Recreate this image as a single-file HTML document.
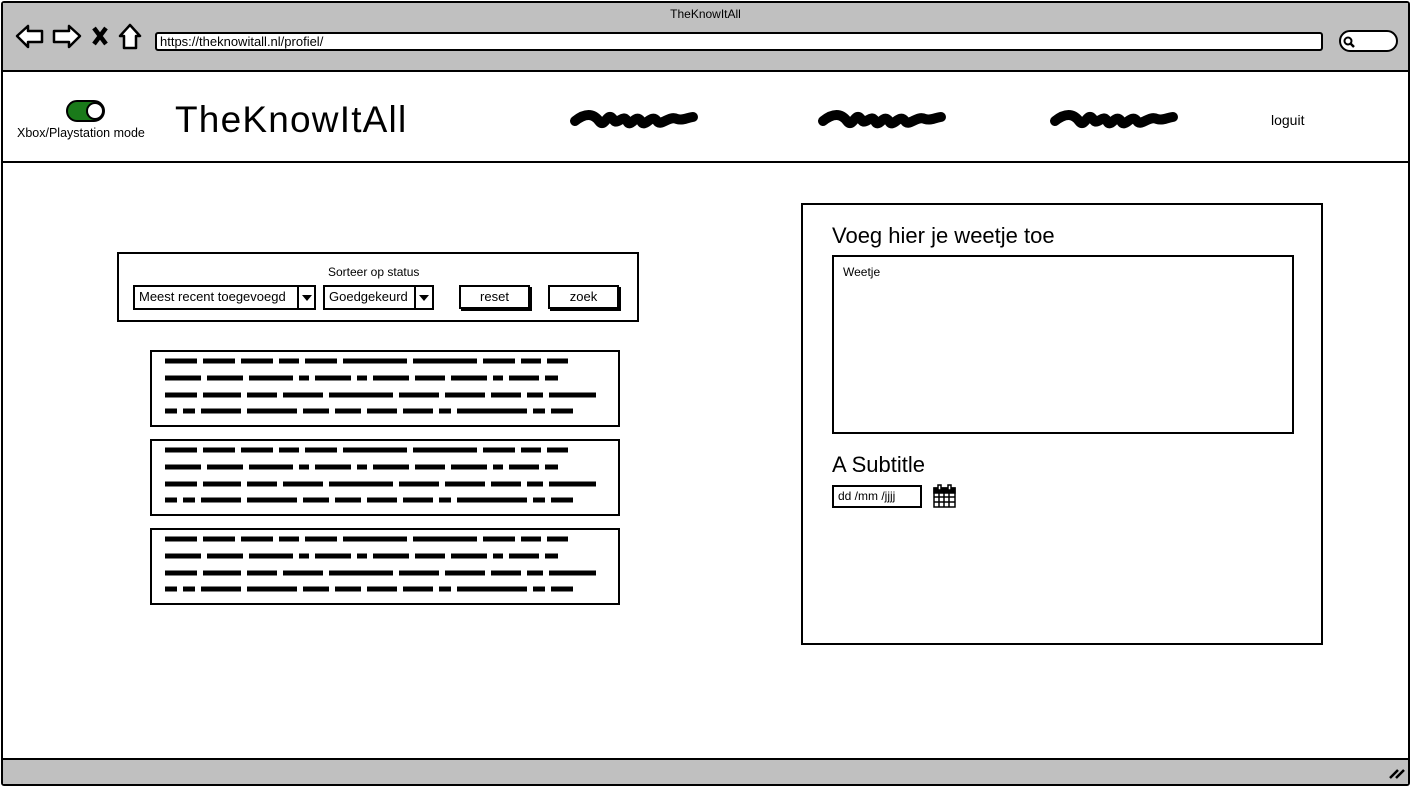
<!DOCTYPE html>
<html><head><meta charset="utf-8"><style>
*{margin:0;padding:0;box-sizing:border-box}
body{width:1411px;height:787px;position:relative;background:#fff;font-family:"Liberation Sans",sans-serif;color:#000;overflow:hidden}
.a{position:absolute}
.bx{position:absolute;border:2px solid #000;background:#fff}
.t{position:absolute;white-space:nowrap}
</style></head><body>
<div class="a" style="left:1px;top:1px;width:1409px;height:785px;border:2px solid #000;border-radius:3px"></div>
<div class="a" style="left:3px;top:3px;width:1405px;height:69px;background:#c0c0c0;border-bottom:2px solid #000"></div>
<div class="t" style="left:0;width:1411px;text-align:center;top:7px;font-size:12px">TheKnowItAll</div>
<svg class="a" style="left:14px;top:22px" width="130" height="30" viewBox="0 0 130 30" fill="#fff" stroke="#000" stroke-width="2.5" stroke-linejoin="round">
<path d="M3 14 L14 4 L14 9 L28 9 L28 20 L14 20 L14 25 Z"/>
<path d="M66 14 L55 4 L55 9 L40 9 L40 20 L55 20 L55 25 Z"/>
<path d="M80 6 L92 22 M92 6 L80 22" stroke-width="4.5"/>
<path d="M106 14 L116 3 L126 14 L122 14 L122 26 L110 26 L110 14 Z"/>
</svg>
<div class="bx" style="left:155px;top:32px;width:1168px;height:19px;border-radius:3px"></div>
<div class="t" style="left:160px;top:34px;font-size:13px">https://theknowitall.nl/profiel/</div>
<div class="bx" style="left:1339px;top:30px;width:59px;height:22px;border-radius:11px"></div>
<svg class="a" style="left:1342px;top:35px" width="14" height="14"><circle cx="6" cy="6" r="3.5" fill="none" stroke="#000" stroke-width="2"/><path d="M8.5 8.5 L12 12" stroke="#000" stroke-width="2.5"/></svg>
<div class="a" style="left:3px;top:161px;width:1405px;height:2px;background:#000"></div>
<div class="a" style="left:66px;top:100px;width:39px;height:22px;border:2px solid #000;border-radius:11px;background:#1a7a1a"></div>
<div class="a" style="left:86px;top:102px;width:18px;height:18px;border-radius:50%;background:#fff;border:2px solid #000"></div>
<div class="t" style="left:17px;top:126px;font-size:12.5px">Xbox/Playstation mode</div>
<div class="t" style="left:175px;top:99px;font-size:37px;letter-spacing:1.2px">TheKnowItAll</div>
<svg class="a" style="left:565px;top:105px" width="620" height="30" fill="none" stroke="#000" stroke-width="10" stroke-linecap="round" stroke-linejoin="round">
<path d="M10 16 C20 8 28 8 34 16 C40 24 42 6 48 14 C52 22 58 8 62 16 C66 24 70 8 76 16 C80 24 86 8 92 16 C96 22 104 10 112 14 C118 16 124 12 128 12"/>
<path d="M258 16 C268 8 276 8 282 16 C288 24 290 6 296 14 C300 22 306 8 310 16 C314 24 318 8 324 16 C328 24 334 8 340 16 C344 22 352 10 360 14 C366 16 372 12 376 12"/>
<path d="M490 16 C500 8 508 8 514 16 C520 24 522 6 528 14 C532 22 538 8 542 16 C546 24 550 8 556 16 C560 24 566 8 572 16 C576 22 584 10 592 14 C598 16 604 12 608 12"/>
</svg>
<div class="t" style="left:1271px;top:112px;font-size:14px">loguit</div>
<div class="bx" style="left:117px;top:252px;width:522px;height:70px"></div>
<div class="t" style="left:328px;top:265px;font-size:12px">Sorteer op status</div>
<div class="bx" style="left:133px;top:285px;width:183px;height:25px"></div>
<div class="a" style="left:297px;top:285px;width:2px;height:25px;background:#000"></div>
<div class="t" style="left:139px;top:289px;font-size:13px">Meest recent toegevoegd</div>
<svg class="a" style="left:301px;top:294px" width="12" height="8"><path d="M1 1 L11 1 L6 7Z"/></svg>
<div class="bx" style="left:323px;top:285px;width:111px;height:25px"></div>
<div class="a" style="left:414px;top:285px;width:2px;height:25px;background:#000"></div>
<div class="t" style="left:329px;top:289px;font-size:13px">Goedgekeurd</div>
<svg class="a" style="left:418px;top:294px" width="12" height="8"><path d="M1 1 L11 1 L6 7Z"/></svg>
<div class="bx" style="left:459px;top:285px;width:71px;height:24px;box-shadow:2px 2px 0 #000;text-align:center;font-size:13px;line-height:20px">reset</div>
<div class="bx" style="left:548px;top:285px;width:71px;height:24px;box-shadow:2px 2px 0 #000;text-align:center;font-size:13px;line-height:20px">zoek</div>
<div class="bx" style="left:150px;top:350px;width:470px;height:77px"></div>
<div class="bx" style="left:150px;top:439px;width:470px;height:77px"></div>
<div class="bx" style="left:150px;top:528px;width:470px;height:77px"></div>
<svg class="a" style="left:0;top:0" width="700" height="700" fill="none" stroke="#000" stroke-width="5" stroke-linecap="butt">
<defs><g id="sc">
<path d="M165 11 H568" stroke-dasharray="32 6 32 6 32 6 20 6 32 6 64 6 64 6 32 6 20 6 21 50"/>
<path d="M165 28 H598" stroke-dasharray="36 6 36 6 44 6 10 6 36 6 10 6 36 6 30 6 36 6 10 6 30 6 13 50"/>
<path d="M165 45 H596" stroke-dasharray="32 6 38 6 30 6 40 6 64 6 40 6 40 6 30 6 16 6 47 50"/>
<path d="M165 61 H573" stroke-dasharray="12 6 12 6 40 6 50 6 26 6 26 6 30 6 30 6 12 6 70 6 12 6 22 50"/>
</g></defs>
<use href="#sc" y="350"/><use href="#sc" y="439"/><use href="#sc" y="528"/>
</svg>
<div class="bx" style="left:801px;top:203px;width:522px;height:442px"></div>
<div class="t" style="left:832px;top:223px;font-size:22px">Voeg hier je weetje toe</div>
<div class="bx" style="left:832px;top:255px;width:462px;height:179px"></div>
<div class="t" style="left:843px;top:265px;font-size:12px">Weetje</div>
<div class="t" style="left:832px;top:452px;font-size:22px">A Subtitle</div>
<div class="bx" style="left:832px;top:485px;width:90px;height:23px"></div>
<div class="t" style="left:838px;top:489px;font-size:12px">dd /mm /jjjj</div>
<svg class="a" style="left:932px;top:484px" width="25" height="25" fill="none" stroke="#000" stroke-width="1.5">
<rect x="2" y="4" width="21" height="19" fill="#fff"/><rect x="2" y="4" width="21" height="5" fill="#000"/>
<path d="M2 13 H23 M2 18 H23 M7 9 V23 M12 9 V23 M17 9 V23"/>
<rect x="6" y="1" width="3" height="5" fill="#fff"/><rect x="16" y="1" width="3" height="5" fill="#fff"/>
</svg>
<div class="a" style="left:3px;top:758px;width:1405px;height:26px;background:#c0c0c0;border-top:2px solid #000"></div>
<svg class="a" style="left:1388px;top:766px" width="18" height="14" stroke="#000" stroke-width="2.5"><path d="M2 12 L10 4 M8 12 L16 4"/></svg>
</body></html>
